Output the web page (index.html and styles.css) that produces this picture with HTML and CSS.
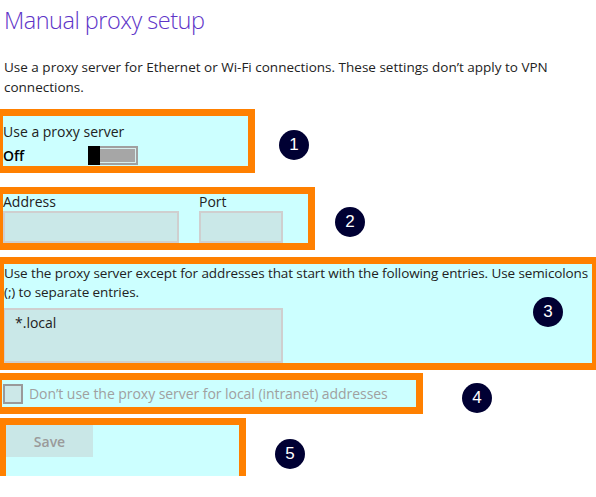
FILE: index.html
```html
<!DOCTYPE html>
<html lang="en">
<head>
<meta charset="utf-8">
<title>Manual proxy setup</title>
<link rel="stylesheet" href="styles.css">
</head>
<body>
<main class="page">
  <h1 class="title">Manual proxy setup</h1>
  <p class="intro">Use a proxy server for Ethernet or Wi-Fi connections. These settings don’t apply to VPN connections.</p>

  <section class="zone zone-toggle">
    <div class="label">Use a proxy server</div>
    <div class="toggle-row">
      <span class="state">Off</span>
      <span class="toggle"><span class="thumb"></span><span class="track"></span></span>
    </div>
    <span class="badge badge-1">1</span>
  </section>

  <section class="zone zone-address">
    <label class="field-label" for="addr">Address</label>
    <label class="field-label" for="port">Port</label>
    <input class="field" id="addr" type="text">
    <input class="field" id="port" type="text">
    <span class="badge badge-2">2</span>
  </section>

  <section class="zone zone-except">
    <p class="except-text">Use the proxy server except for addresses that start with the following entries. Use semicolons (;) to separate entries.</p>
    <textarea class="field field-area">*.local</textarea>
    <span class="badge badge-3">3</span>
  </section>

  <section class="zone zone-local">
    <span class="check"></span>
    <span class="check-label">Don’t use the proxy server for local (intranet) addresses</span>
    <span class="badge badge-4">4</span>
  </section>

  <section class="zone zone-save">
    <button class="save" type="button">Save</button>
    <span class="badge badge-5">5</span>
  </section>
</main>
</body>
</html>
```

FILE: styles.css
```css
html {
  overflow: hidden;
}

body {
  margin: 0;
  background: #ffffff;
  color: #222222;
  font-family: "Open Sans", "Noto Sans", sans-serif;
  font-size: 13.5px;
}

.page {
  padding-left: 3px;
}

.title {
  margin: 5px 0 0 1px;
  font-size: 23.5px;
  font-weight: 300;
  letter-spacing: -0.5px;
  line-height: 30px;
  color: #5e34c8;
}

.intro {
  margin: 23px 0 0 1px;
  line-height: 19.5px;
  color: #222222;
}

.zone {
  position: relative;
  background: #ccffff;
}

.zone::after {
  content: "";
  position: absolute;
  inset: -7px;
  border: 7px solid #ff8000;
  pointer-events: none;
}

/* 1 */
.zone-toggle {
  width: 245px;
  margin-top: 19px;
  padding: 6px 0 1px;
}

.label {
  font-size: 14px;
  line-height: 20px;
}

.toggle-row {
  display: flex;
  align-items: center;
  height: 19px;
  margin-top: 4px;
}

.state {
  width: 85px;
  font-size: 14px;
  font-weight: 600;
  color: #000000;
  line-height: 19px;
}

.toggle {
  display: flex;
  width: 50px;
  height: 19px;
}

.thumb {
  width: 12px;
  height: 19px;
  background: #000000;
}

.track {
  flex: 1;
  box-sizing: border-box;
  height: 19px;
  border: 2px solid #a0a0a0;
  border-left: 0;
  box-shadow: inset 0 1px 0 #d6eeee, inset -1px -1px 0 #d6eeee;
  background: #a6a6a6;
}

/* 2 */
.zone-address {
  width: 305px;
  margin-top: 28px;
  display: grid;
  grid-template-columns: 176px 84px;
  column-gap: 20px;
}

.field-label {
  font-size: 14px;
  line-height: 16px;
  color: #222222;
}

.field {
  box-sizing: border-box;
  margin: 0;
  padding: 0 8px;
  border: 2px solid #cfcfcf;
  border-radius: 0;
  background: #cae8e8;
  color: #222222;
  font: inherit;
  outline: none;
  appearance: none;
}

.zone-address .field {
  display: block;
  width: 100%;
  height: 32px;
  margin-top: 1px;
}

/* 3 */
.zone-except {
  width: 588px;
  margin: 21px 0 0 1px;
}

.except-text {
  margin: 0;
  line-height: 19px;
  letter-spacing: -0.1px;
}

.field-area {
  display: block;
  width: 280px;
  height: 55px;
  margin: 6px 0 -10px -1px;
  padding: 3px 8px 0 10px;
  font-size: 14px;
  line-height: 20px;
  resize: none;
  overflow: hidden;
}

/* 4 */
.zone-local {
  width: 414px;
  height: 27px;
  margin: 27px 0 0 -1px;
  display: flex;
  align-items: center;
}

.check {
  box-sizing: border-box;
  width: 20px;
  height: 20px;
  margin-left: 1px;
  border: 2px solid #9a9a9a;
  background: #cce8e8;
}

.check-label {
  margin-left: 6px;
  font-size: 14px;
  letter-spacing: -0.05px;
  color: #a0a0a0;
}

/* 5 */
.zone-save {
  width: 233px;
  height: 51px;
  margin: 18px 0 0 3px;
}

.save {
  display: block;
  width: 87px;
  height: 32px;
  margin: 0;
  padding: 0;
  border: 0;
  background: #c9e7e7;
  color: #9a9a9a;
  font: inherit;
  font-size: 14px;
  font-weight: 600;
}

/* number badges */
.badge {
  position: absolute;
  width: 30px;
  height: 30px;
  border-radius: 50%;
  background: #000033;
  color: #ffffff;
  font-family: "Liberation Sans", Arial, sans-serif;
  font-size: 17px;
  line-height: 30px;
  text-align: center;
}

.badge-1 { left: 276px; top: 14px; }
.badge-2 { left: 332px; top: 13px; }
.badge-3 { left: 529px; top: 33px; }
.badge-4 { left: 460px; top: 3px; }
.badge-5 { left: 269px; top: 14px; }
```
